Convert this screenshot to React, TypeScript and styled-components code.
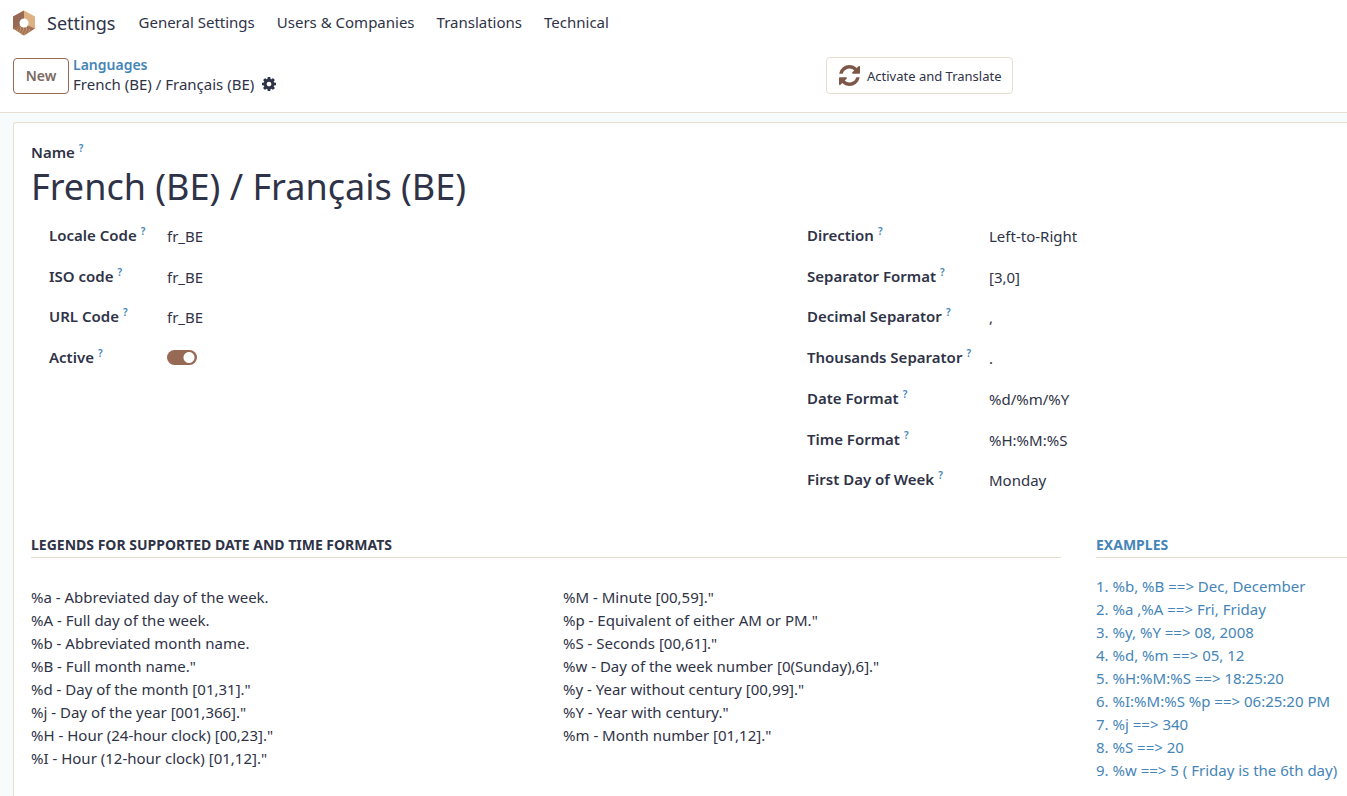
import React from "react";
import styled, { createGlobalStyle } from "styled-components";

const ink = "#2f3347";
const blue = "#4585b8";
const brown = "#966a55";
const line = "#e6dfd1";

const GlobalStyle = createGlobalStyle`
  *, *::before, *::after { box-sizing: border-box; }
  body {
    margin: 0;
    background: #f7fbfb;
    color: ${ink};
    font-family: "Noto Sans", sans-serif;
    font-size: 15px;
    line-height: 20px;
    overflow-x: hidden;
  }
  h1, h2, p, ul, ol, dl, dd { margin: 0; padding: 0; }
  button { font: inherit; color: inherit; cursor: pointer; }
  a { text-decoration: none; color: inherit; }
`;

const Page = styled.div`
  min-height: 100vh;
  display: flex;
  flex-direction: column;
`;

const NavBar = styled.nav`
  display: flex;
  align-items: center;
  height: 46px;
  padding: 0 12px;
  background: #fff;
  white-space: nowrap;
`;

const Brand = styled.a`
  display: flex;
  align-items: center;
  gap: 11px;
  margin-right: 23px;
  font-size: 18px;
  line-height: 24px;
`;

const NavLinks = styled.div`
  display: flex;
  gap: 22px;
  padding-bottom: 2px;
`;

const ControlPanel = styled.header`
  display: grid;
  grid-template-columns: 813fr 521fr;
  align-items: start;
  height: 67px;
  padding: 11px 0 0 13px;
  background: #fff;
  border-bottom: 1px solid ${line};
`;

const Crumbs = styled.div`
  display: flex;
  align-items: center;
  gap: 4px;
`;

const NewButton = styled.button`
  width: 56px;
  height: 36px;
  padding: 0;
  border: 1px solid ${brown};
  border-radius: 4px;
  background: #fff;
  color: #7b6962;
  font-size: 14px;
  font-weight: 600;
`;

const CrumbLink = styled.a`
  display: block;
  color: ${blue};
  font-size: 14px;
  font-weight: 560;
  line-height: 16px;
`;

const CrumbCurrent = styled.div`
  display: flex;
  align-items: center;
  gap: 8px;
  line-height: 22px;
`;

const GearButton = styled.button`
  display: flex;
  padding: 0;
  border: 0;
  background: none;
`;

const StatButton = styled.button`
  justify-self: start;
  display: flex;
  align-items: center;
  gap: 7px;
  height: 37px;
  padding: 0 10px 0 12px;
  border: 1px solid ${line};
  border-radius: 4px;
  background: #fff;
  font-size: 13px;
  white-space: nowrap;
`;

const Sheet = styled.main`
  flex: 1;
  margin: 9px 0 0 13px;
  padding: 19px 0 16px 17px;
  border: solid ${line};
  border-width: 1px 0 0 1px;
  border-top-left-radius: 3px;
  background: #fff;
`;

const Term = styled.span`
  font-weight: 560;
`;

const Hint = styled.sup`
  margin-left: 4px;
  color: ${blue};
  font-size: 10px;
  font-weight: 600;
  line-height: 10px;
`;

const Title = styled.h1`
  font-size: 36px;
  line-height: 50px;
  font-weight: 400;
  white-space: nowrap;
`;

const Groups = styled.div`
  display: grid;
  grid-template-columns: 758fr 540fr;
  padding-left: 18px;
  margin-top: 5px;
  height: 285px;
`;

const Group = styled.div`
  display: grid;
  grid-template-rows: repeat(7, 1fr);
`;

const Field = styled.div<{ $label: number }>`
  display: grid;
  grid-template-columns: ${(p) => p.$label}px 1fr;
  align-items: start;
  padding-top: 8px;
`;

const Value = styled.span`
  line-height: 22px;
`;

const Toggle = styled.input`
  appearance: none;
  display: block;
  width: 30px;
  height: 15px;
  margin: 3px 0 0;
  border-radius: 8px;
  background: radial-gradient(circle at 22px 50%, #fff 5px, transparent 6px) ${brown};
`;

const Legends = styled.div`
  display: grid;
  grid-template-columns: 1030fr 251fr;
  column-gap: 35px;
  margin-top: 33px;
`;

const Heading = styled.h2`
  padding-bottom: 2px;
  border-bottom: 1px solid ${line};
  font-size: 14px;
  line-height: 20px;
  font-weight: 700;
  text-transform: uppercase;
`;

const LegendColumns = styled.div`
  display: grid;
  grid-template-columns: 1fr 1fr;
  column-gap: 34px;
  margin-top: 28px;
`;

const Lines = styled.ul`
  list-style: none;
  line-height: 23px;
  white-space: nowrap;
`;

const Examples = styled.section`
  color: ${blue};
`;

const ExampleLines = styled.ol`
  list-style: none;
  margin-top: 17px;
  line-height: 23px;
  white-space: nowrap;
`;

const Logo = () => (
  <svg width="24" height="26" viewBox="0 0 24 26" aria-hidden="true">
    <path d="M12 .5 23 6.500v12L12 25.500 1 18.500v-12z" fill="#deb184" />
    <path d="M12 .5V13L1 19.500v-13z" fill="#966a55" />
    <path d="M1 18.500 7 16h10l6 2.500-11 7z" fill="#a37458" />
    <path d="M5 20h14M7 22h10M9 24h6M8 18h8" stroke="#deb184" strokeWidth="1" strokeDasharray="1 2" />
    <circle cx="12" cy="13" r="4.500" fill="#fff" />
  </svg>
);

const Gear = () => (
  <svg width="14" height="14" viewBox="0 0 1536 1536" fill={ink} aria-hidden="true">
    <path d="M1024 768q0-106-75-181t-181-75-181 75-75 181 75 181 181 75 181-75 75-181zm512-109v222q0 12-8 23t-20 13l-185 28q-19 54-39 91 35 50 107 138 10 12 10 25t-9 23q-27 37-99 108t-94 71q-12 0-26-9l-138-108q-44 23-91 38-16 136-29 186-7 28-36 28H657q-14 0-24.500-8.500T621 1506l-28-184q-49-16-90-37l-141 107q-10 9-25 9-14 0-25-11-126-114-165-168-7-10-7-23 0-12 8-23 15-21 51-66.500t54-70.500q-27-50-41-99L29 913q-13-2-21-12.500T0 877V655q0-12 8-23t19-13l186-28q14-46 39-92-40-57-107-138-10-12-10-24 0-10 9-23 26-36 98.500-107.500T337 135q13 0 26 10l138 107q44-23 91-38 16-136 29-186 7-28 36-28h222q14 0 24.500 8.500T915 30l28 184q49 16 90 37l142-107q9-9 24-9 13 0 25 10 129 119 165 170 7 8 7 22 0 12-8 23-15 21-51 66.500t-54 70.500q26 50 41 98l183 28q13 2 21 12.500t8 23.500z" />
  </svg>
);

const Refresh = () => (
  <svg width="21" height="21" viewBox="0 0 1536 1536" fill="#7d5849" aria-hidden="true">
    <path d="M1511 928q0 5-1 7-64 268-268 434.500T764 1536q-146 0-282.500-55T238 1324l-129 129q-19 19-45 19t-45-19-19-45V960q0-26 19-45t45-19h448q26 0 45 19t19 45-19 45l-137 137q71 66 161 102t187 36q134 0 250-65t186-179q11-17 53-117 8-23 30-23h192q13 0 22.500 9.500t9.500 22.500zm25-800v448q0 26-19 45t-45 19h-448q-26 0-45-19t-19-45 19-45l138-138Q969 256 768 256q-134 0-250 65T332 500q-11 17-53 117-8 23-30 23H50q-13 0-22.500-9.500T18 608v-7q65-268 270-434.500T768 0q146 0 284 55.500T1297 212l130-129q19-19 45-19t45 19 19 45z" />
  </svg>
);

const menu = ["General Settings", "Users & Companies", "Translations", "Technical"];

const codes = [
  ["Locale Code", "fr_BE"],
  ["ISO code", "fr_BE"],
  ["URL Code", "fr_BE"],
];

const formats = [
  ["Direction", "Left-to-Right"],
  ["Separator Format", "[3,0]"],
  ["Decimal Separator", ","],
  ["Thousands Separator", "."],
  ["Date Format", "%d/%m/%Y"],
  ["Time Format", "%H:%M:%S"],
  ["First Day of Week", "Monday"],
];

const dateLegend = [
  "%a - Abbreviated day of the week.",
  "%A - Full day of the week.",
  "%b - Abbreviated month name.",
  "%B - Full month name.\"",
  "%d - Day of the month [01,31].\"",
  "%j - Day of the year [001,366].\"",
  "%H - Hour (24-hour clock) [00,23].\"",
  "%I - Hour (12-hour clock) [01,12].\"",
];

const timeLegend = [
  "%M - Minute [00,59].\"",
  "%p - Equivalent of either AM or PM.\"",
  "%S - Seconds [00,61].\"",
  "%w - Day of the week number [0(Sunday),6].\"",
  "%y - Year without century [00,99].\"",
  "%Y - Year with century.\"",
  "%m - Month number [01,12].\"",
];

const examples = [
  "1. %b, %B ==> Dec, December",
  "2. %a ,%A ==> Fri, Friday",
  "3. %y, %Y ==> 08, 2008",
  "4. %d, %m ==> 05, 12",
  "5. %H:%M:%S ==> 18:25:20",
  "6. %I:%M:%S %p ==> 06:25:20 PM",
  "7. %j ==> 340",
  "8. %S ==> 20",
  "9. %w ==> 5 ( Friday is the 6th day)",
];

const FieldLabel = ({ text, htmlFor }: { text: string; htmlFor?: string }) => (
  <Term as={htmlFor ? "label" : "span"} {...(htmlFor ? { htmlFor } : {})}>
    {text}
    <Hint>?</Hint>
  </Term>
);

export default function App() {
  return (
    <Page>
      <GlobalStyle />
      <NavBar>
        <Brand href="#">
          <Logo />
          Settings
        </Brand>
        <NavLinks>
          {menu.map((item) => (
            <a key={item} href="#">{item}</a>
          ))}
        </NavLinks>
      </NavBar>
      <ControlPanel>
        <Crumbs>
          <NewButton type="button">New</NewButton>
          <div>
            <CrumbLink href="#">Languages</CrumbLink>
            <CrumbCurrent>
              French (BE) / Français (BE)
              <GearButton type="button" aria-label="Actions">
                <Gear />
              </GearButton>
            </CrumbCurrent>
          </div>
        </Crumbs>
        <StatButton type="button">
          <Refresh />
          Activate and Translate
        </StatButton>
      </ControlPanel>
      <Sheet>
        <FieldLabel text="Name" />
        <Title>French (BE) / Français (BE)</Title>
        <Groups>
          <Group>
            {codes.map(([label, value]) => (
              <Field key={label} $label={118}>
                <FieldLabel text={label} />
                <Value>{value}</Value>
              </Field>
            ))}
            <Field $label={118}>
              <FieldLabel text="Active" htmlFor="active" />
              <Toggle id="active" type="checkbox" defaultChecked />
            </Field>
          </Group>
          <Group>
            {formats.map(([label, value]) => (
              <Field key={label} $label={182}>
                <FieldLabel text={label} />
                <Value>{value}</Value>
              </Field>
            ))}
          </Group>
        </Groups>
        <Legends>
          <section>
            <Heading>Legends for supported Date and Time Formats</Heading>
            <LegendColumns>
              <Lines>
                {dateLegend.map((text) => <li key={text}>{text}</li>)}
              </Lines>
              <Lines>
                {timeLegend.map((text) => <li key={text}>{text}</li>)}
              </Lines>
            </LegendColumns>
          </section>
          <Examples>
            <Heading>Examples</Heading>
            <ExampleLines>
              {examples.map((text) => <li key={text}>{text}</li>)}
            </ExampleLines>
          </Examples>
        </Legends>
      </Sheet>
    </Page>
  );
}
